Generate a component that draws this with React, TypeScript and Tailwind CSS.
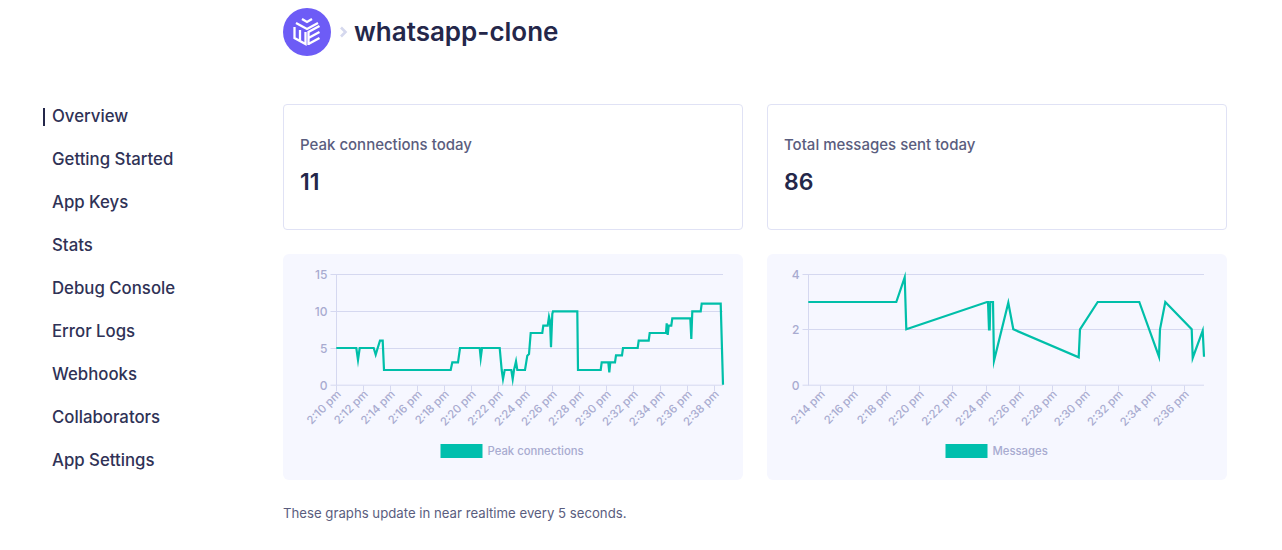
const NAV = ["Overview", "Getting Started", "App Keys", "Stats", "Debug Console", "Error Logs", "Webhooks", "Collaborators", "App Settings"];

type Z = [number, number];
const y0 = 131.2;

const peakA: Z[] = [[160,282],[220,282],[225,318],[230,282],[272,282],[278,302],[284,282],[291,260],[299,260],[303,348],[503,348],[508,325],[525,325],[531,282],[590,282],[593,312],[597,282],[650,282],[656,348],[660,375],[665,348],[685,348]];
const peakB: Z[] = [[8,375],[12,348],[18,322],[22,348],[45,348],[52,305],[57,300],[62,237],[97,237],[100,215],[113,215],[117,188],[120,200],[123,280],[127,180],[129,172],[202,172],[204,348],[272,348],[275,325],[295,325],[298,355],[301,325],[315,325],[318,304],[336,304],[339,282],[383,282],[386,260],[416,260],[419,237],[468,237],[470,208],[473,243],[476,215],[484,215],[487,193],[541,193],[544,255],[547,172],[572,172],[575,149],[632,149],[639,392]];
const msgA: Z[] = [[124,144],[388,144],[413,70],[418,226],[660,144],[663,144],[666,226],[668,226],[670,144],[678,144],[681,320]];
const msgB: Z[] = [[25,146],[40,226],[236,310],[240,226],[293,144],[418,144],[477,308],[480,226],[496,144],[575,226],[578,312],[608,230],[612,308]];

const toPts = (a: Z[], ox: number) => a.map(([x, y]) => `${(ox + x / 3).toFixed(1)},${(y / 3).toFixed(1)}`).join(" ");

const GRID = "#d5d8f0";
const LABEL = "#a8abd0";

function Chart({ axisX, right, yTicks, xLabels, xStart, xStep, points, legend, legendX }: {
  axisX: number; right: number; yTicks: { label: string; y: number }[]; xLabels: string[]; xStart: number; xStep: number; points: string; legend: string; legendX: number;
}) {
  return (
    <div className="h-[226px] rounded-md bg-[#f6f7ff]">
      <svg width="460" height="226" viewBox="0 0 460 226" className="block" style={{ fontFamily: "Inter, sans-serif" }}>
        {yTicks.map((t) => (
          <g key={t.label}>
            <line x1={axisX - 6} x2={right} y1={t.y} y2={t.y} stroke={GRID} strokeWidth="1" />
            <text x={axisX - 9} y={t.y + 4.3} textAnchor="end" fontSize="12" fontWeight="500" fill={LABEL}>{t.label}</text>
          </g>
        ))}
        <line x1={axisX} x2={axisX} y1={20} y2={131.5} stroke={GRID} strokeWidth="1" />
        {xLabels.map((l, i) => {
          const x = Math.round(xStart + xStep * i) + 0.5;
          return (
            <g key={l}>
              <line x1={x} x2={x} y1={131.5} y2={137} stroke={GRID} strokeWidth="1" />
              <text transform={`translate(${x + 5} 141) rotate(-45)`} textAnchor="end" fontSize="11.3" fontWeight="500" fill={LABEL}>{l}</text>
            </g>
          );
        })}
        <polyline points={points} fill="none" stroke="#00bfa9" strokeWidth="2.2" strokeLinejoin="miter" strokeMiterlimit="10" />
        <rect x={legendX} y={190} width="42" height="14" fill="#00bfad" />
        <text x={legendX + 47} y={201} fontSize="11.3" fontWeight="500" fill={LABEL}>{legend}</text>
      </svg>
    </div>
  );
}

function Stat({ title, value }: { title: string; value: string }) {
  return (
    <div className="h-[126px] rounded border border-[#e0e2f5] bg-white px-4 pt-[30px]">
      <div className="text-[15px] font-medium leading-5 text-[#5a5d7e]">{title}</div>
      <div className="mt-[13px] text-[23px] font-semibold leading-7 text-[#24274a]">{value}</div>
    </div>
  );
}

const times = (start: number, n: number) => Array.from({ length: n }, (_, i) => {
  const m = start + i * 2;
  return `2:${String(m)} pm`;
});

export default function App() {
  return (
    <div className="flex h-[550px] bg-white font-['Inter',sans-serif] text-[#24274a]">
      <aside className="w-[283px] shrink-0 pt-[95px] pl-[43px]">
        <ul>
          {NAV.map((n, i) => (
            <li key={n} className="flex h-[43px] items-center">
              <span className={i === 0 ? "mr-[7px] h-[18px] w-0.5 bg-[#24274a]" : "mr-[7px] h-[18px] w-0.5"} />
              <span className="text-[16.8px] font-medium text-[#2f3256]">{n}</span>
            </li>
          ))}
        </ul>
      </aside>
      <main className="w-[944px] shrink-0 pt-2">
        <header className="flex h-12 items-center">
          <svg width="48" height="48" viewBox="0 0 48 48" className="shrink-0">
            <circle cx="24" cy="24" r="24" fill="#6d5cf6" />
            <g fill="none" stroke="#fff" strokeWidth="2.3">
              <path d="M19 11 L24 14 L29 11" />
              <path d="M13 15 L24 21 L35 15" />
              <path d="M11.5 19 V30 L22.5 36 V24" />
              <path d="M17 22 V32" />
              <path d="M25.5 37 V24 L36.5 18 M25.5 30 L36.5 24 M25.5 36 L36.5 30" />
            </g>
          </svg>
          <svg width="23" height="48" viewBox="0 0 23 48" className="shrink-0">
            <path d="M10 19.5 L14.5 24 L10 28.5" fill="none" stroke="#d5d8ee" strokeWidth="2.6" />
          </svg>
          <h1 className="-mt-0.5 text-[26px] font-semibold text-[#24274a]">whatsapp-clone</h1>
        </header>
        <div className="mt-12 grid grid-cols-2 gap-6">
          <Stat title="Peak connections today" value="11" />
          <Stat title="Total messages sent today" value="86" />
          <Chart
            axisX={53.5}
            right={440}
            yTicks={[{ label: "15", y: 20.5 }, { label: "10", y: 57.5 }, { label: "5", y: 94.5 }, { label: "0", y: y0 }]}
            xLabels={times(10, 15)}
            xStart={53}
            xStep={27}
            points={`${toPts(peakA, 0)} ${toPts(peakB, 227)}`}
            legend="Peak connections"
            legendX={157.5}
          />
          <Chart
            axisX={41.5}
            right={437}
            yTicks={[{ label: "4", y: 20.5 }, { label: "2", y: 75.5 }, { label: "0", y: y0 }]}
            xLabels={times(14, 12)}
            xStart={53}
            xStep={33.1}
            points={`${toPts(msgA, 0)} ${toPts(msgB, 233)}`}
            legend="Messages"
            legendX={178.5}
          />
        </div>
        <p className="mt-[23px] text-[13.2px] leading-5 text-[#5a5d7e]">These graphs update in near realtime every 5 seconds.</p>
      </main>
    </div>
  );
}
